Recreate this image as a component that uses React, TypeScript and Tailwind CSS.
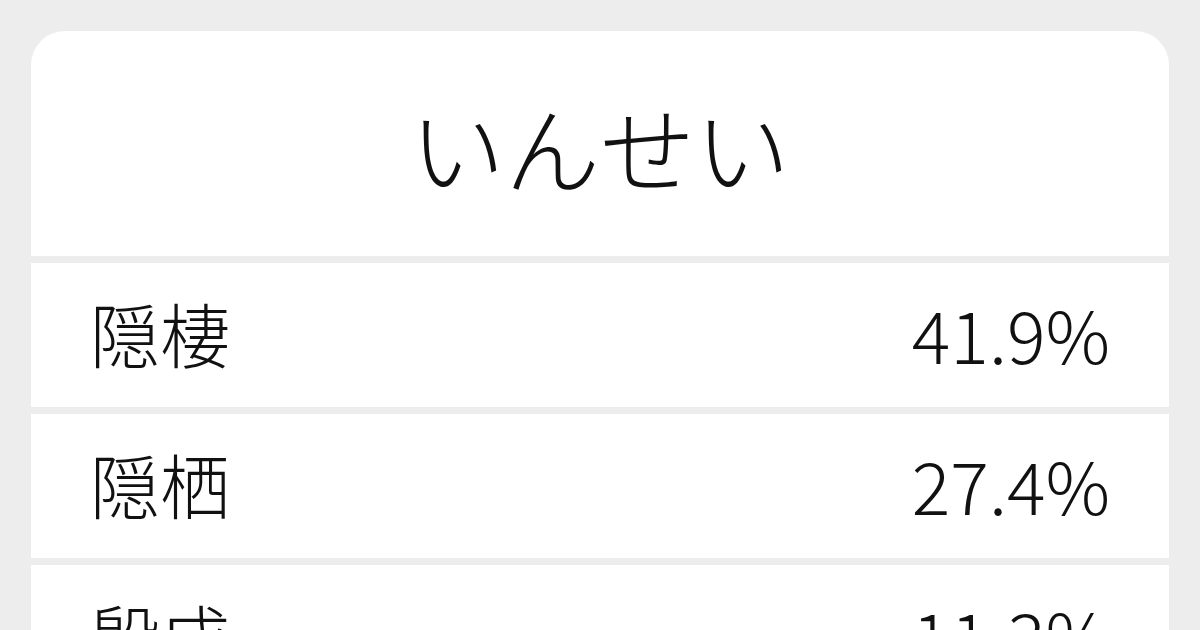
const ROWS = [
  { word: "隠棲", pct: "41.9%" },
  { word: "隠栖", pct: "27.4%" },
  { word: "殷成", pct: "11.3%" },
];

export default function App() {
  return (
    <div
      className="h-[630px] w-[1200px] overflow-hidden bg-[#ededed] px-[31px] pt-[31px] text-[#111]"
      style={{ fontFamily: '"Noto Sans CJK JP", "Noto Sans", sans-serif' }}
    >
      <div className="flex flex-col gap-[7px] overflow-hidden rounded-t-[34px]">
        <div className="flex h-[225px] items-center justify-center bg-white pt-[4px]">
          <h1 className="text-[95px] font-light leading-none">いんせい</h1>
        </div>
        {ROWS.map((r) => (
          <div
            key={r.word}
            className="flex h-[144px] shrink-0 items-center justify-between bg-white pb-[5px] pl-[59px] pr-[59px]"
          >
            <span className="text-[70px] font-light leading-none">{r.word}</span>
            <span className="text-[72px] font-light leading-none">{r.pct}</span>
          </div>
        ))}
      </div>
    </div>
  );
}
